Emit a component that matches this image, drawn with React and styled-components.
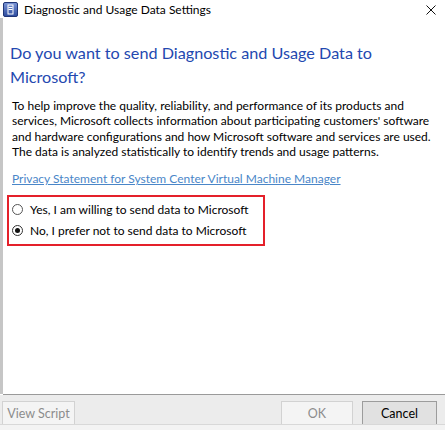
import React from 'react'
import styled, { createGlobalStyle } from 'styled-components'

const Global = createGlobalStyle`
  html, body {
    margin: 0;
    padding: 0;
    background: #ffffff;
  }
  body {
    font-family: Lato, "Noto Sans", "Liberation Sans", sans-serif;
  }
`

const Window = styled.div`
  width: 445px;
  height: 430px;
  display: flex;
  flex-direction: column;
  background: #ffffff;
  overflow: hidden;
`

const TitleBar = styled.div`
  height: 18px;
  display: flex;
  align-items: center;
  padding: 0 0 0 3px;
  flex-shrink: 0;
`

const TitleText = styled.span`
  margin-left: 6px;
  font-size: 12px;
  color: #000;
  flex: 1;
  line-height: 18px;
  padding-top: 2px;
`

const CloseBox = styled.div`
  width: 26px;
  height: 18px;
  display: flex;
  align-items: center;
  justify-content: center;
  margin-right: 1px;
  padding-top: 2px;
`

const Main = styled.div`
  flex: 1;
  display: flex;
  min-height: 0;
`

const LeftStrip = styled.div`
  width: 3px;
  background: #c6c6c6;
  flex-shrink: 0;
`

const Content = styled.div`
  flex: 1;
  padding: 23px 0 0 7px;
`

const Heading = styled.h1`
  margin: 0;
  font-weight: 400;
  font-size: 16.2px;
  line-height: 24px;
  color: #2348b0;
  white-space: nowrap;
`

const Body = styled.p`
  margin: 9px 0 0 2px;
  font-size: 12px;
  line-height: 15.3px;
  color: #000;
  white-space: nowrap;
`

const Link = styled.a`
  display: block;
  margin: 12px 0 0 2px;
  font-size: 12px;
  line-height: 16px;
  color: #4a86c8;
  text-decoration: underline;
  white-space: nowrap;
`

const Choices = styled.div`
  margin: 8px 0 0 -3px;
  width: 254px;
  border: 2px solid #e4202a;
  padding: 2px 0 3px 0;
  display: flex;
  flex-direction: column;
`

const Choice = styled.label`
  display: flex;
  align-items: center;
  height: 21px;
  font-size: 12px;
  color: #000;
  padding-left: 3px;
  white-space: nowrap;
`

const RadioDot = styled.span`
  width: 11px;
  height: 11px;
  border-radius: 50%;
  border: 1px solid ${p => (p.$checked ? '#333' : '#555')};
  background: #fff;
  box-sizing: border-box;
  display: flex;
  align-items: center;
  justify-content: center;
  margin-right: 7px;
  flex-shrink: 0;
  &::after {
    content: '';
    width: 5px;
    height: 5px;
    border-radius: 50%;
    background: ${p => (p.$checked ? '#111' : 'transparent')};
  }
`

const Footer = styled.div`
  flex-shrink: 0;
  border-top: 1px solid #9a9a9a;
  margin-left: 3px;
`

const ButtonBar = styled.div`
  height: 29px;
  display: flex;
  align-items: flex-end;
  background: #ececec;
  margin-left: -3px;
  padding: 0 8px 0 2px;
  border-bottom: 1px solid #d8d8d8;
`

const BottomStrip = styled.div`
  height: 5px;
  margin-left: -3px;
  background: #f3f3f3;
`

const Button = styled.button`
  height: 23px;
  width: ${p => p.$w}px;
  margin-left: ${p => p.$ml || 0}px;
  font-family: Lato, "Noto Sans", "Liberation Sans", sans-serif;
  font-size: 12.5px;
  padding: 0;
  border: 1px solid ${p => (p.$primary ? '#9c9c9c' : '#d2d2d2')};
  background: ${p => (p.$primary ? '#e1e1e1' : '#f4f4f4')};
  color: ${p => (p.$primary ? '#000' : '#8c8c8c')};
  border-bottom: none;
`

const Spacer = styled.div`
  flex: 1;
`

function AppIcon() {
  return (
    <svg width="15" height="15" viewBox="0 0 15 15">
      <defs>
        <linearGradient id="ig" x1="0" y1="0" x2="0" y2="1">
          <stop offset="0" stopColor="#7b95d6" />
          <stop offset="1" stopColor="#2c4b9e" />
        </linearGradient>
      </defs>
      <rect x="0.5" y="0.5" width="14" height="14" rx="1.5" fill="url(#ig)" stroke="#1f3577" />
      <rect x="5" y="3" width="5" height="9" fill="none" stroke="#fff" strokeWidth="1" />
      <line x1="5.5" y1="5.5" x2="9.5" y2="5.5" stroke="#fff" />
      <line x1="5.5" y1="7.5" x2="9.5" y2="7.5" stroke="#fff" />
    </svg>
  )
}

function CloseIcon() {
  return (
    <svg width="10" height="10" viewBox="0 0 10 10">
      <path d="M0.5 0.5 L9.5 9.5 M9.5 0.5 L0.5 9.5" stroke="#111" strokeWidth="1" />
    </svg>
  )
}

export default function App() {
  return (
    <>
      <Global />
      <Window>
        <TitleBar>
          <AppIcon />
          <TitleText>Diagnostic and Usage Data Settings</TitleText>
          <CloseBox>
            <CloseIcon />
          </CloseBox>
        </TitleBar>
        <Main>
          <LeftStrip />
          <Content>
            <Heading>
              Do you want to send Diagnostic and Usage Data to
              <br />
              Microsoft?
            </Heading>
            <Body>
              To help improve the quality, reliability, and performance of its products and
              <br />
              services, Microsoft collects information about participating customers' software
              <br />
              and hardware configurations and how Microsoft software and services are used.
              <br />
              The data is analyzed statistically to identify trends and usage patterns.
            </Body>
            <Link href="#">Privacy Statement for System Center Virtual Machine Manager</Link>
            <Choices>
              <Choice>
                <RadioDot />
                Yes, I am willing to send data to Microsoft
              </Choice>
              <Choice>
                <RadioDot $checked />
                No, I prefer not to send data to Microsoft
              </Choice>
            </Choices>
          </Content>
        </Main>
        <Footer>
          <ButtonBar>
            <Button $w={73}>View Script</Button>
            <Spacer />
            <Button $w={72}>OK</Button>
            <Button $w={75} $ml={9} $primary>
              Cancel
            </Button>
          </ButtonBar>
          <BottomStrip />
        </Footer>
      </Window>
    </>
  )
}
